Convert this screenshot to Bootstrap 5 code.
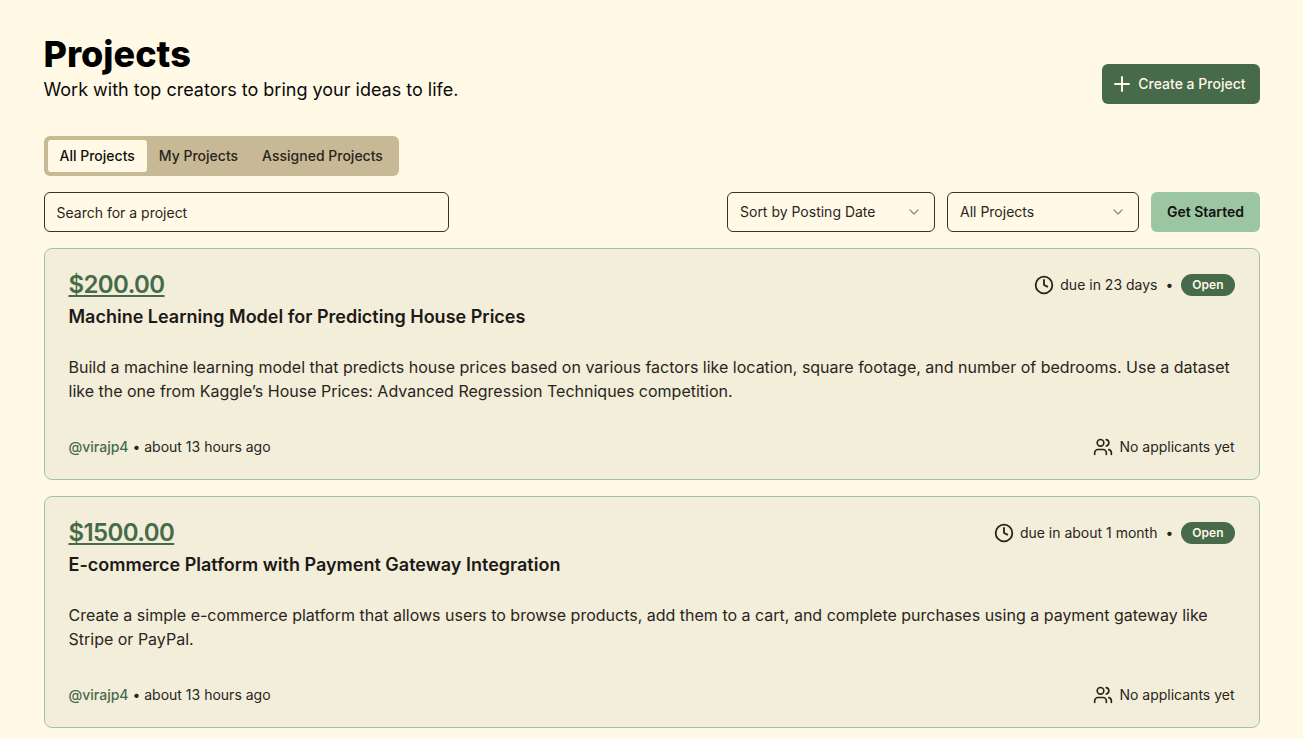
<!DOCTYPE html>
<html lang="en">
<head>
<meta charset="utf-8">
<title>Projects</title>
<link href="https://cdn.jsdelivr.net/npm/bootstrap@5.3.0/dist/css/bootstrap.min.css" rel="stylesheet">
<style>
body{background:#fff9e6;font-family:Inter,"Liberation Sans",sans-serif;color:#1c1917;overflow:hidden}
.shell{width:1216px;margin:0 auto;padding-top:34px}
.page-title{font-size:36px;line-height:40px;font-weight:800;color:#000;margin:0}
.page-sub{font-size:18px;line-height:28px;margin:2px 0 0;color:#0a0a0a}
.create-btn{height:40px;background:#466a4a;color:#fff9e6;border:0;border-radius:6px;font-size:14px;line-height:20px;font-weight:500;padding:0 14px 0 12px;gap:8px}
.create-btn:hover{background:#466a4a;color:#fff9e6}
.tabbar{background:#c8b996;border-radius:6px;padding:4px;height:40px;margin-top:32px;width:355px}
.tabitem{font-size:14px;line-height:20px;font-weight:500;padding:6px 12px;border-radius:3px;color:#2a251c;border:0;background:transparent;white-space:nowrap}
.tabitem.on{background:#fff9e6;color:#111}
.filters{margin-top:16px;height:40px}
.field{height:40px;border:1px solid #3d3222;border-radius:6px;background:#fff9e6;font-size:14px;line-height:20px;color:#2a251c;padding:0 12px;display:flex;align-items:center;justify-content:space-between}
.field-search{width:405px;padding-top:1px}
.field-sort{width:208px}
.field-all{width:192px}
.field svg{opacity:.5}
.pick{padding-left:12.500px}
.filter-end{gap:12px}
.go-btn{height:40px;width:109px;background:#9cc6a2;border:0;border-radius:6px;font-size:14px;line-height:20px;font-weight:600;color:#111;padding:0 0 0 1px}
.go-btn:hover{background:#9cc6a2;color:#111}
.job{background:#f2eeda;border:1px solid #9cc6a2;border-radius:8px;padding:24px 24px 0;height:232px;margin-top:16px}
.price{font-size:24px;line-height:24px;font-weight:600;letter-spacing:-.6px;color:#466a4a;text-decoration:underline}
.price:hover{color:#466a4a}
.job-title{font-size:18px;line-height:28px;font-weight:600;margin:6px 0 0;color:#1c1917}
.job-text{font-size:16px;line-height:24px;margin:24px 0 0;color:#2a251c}
.job-meta{font-size:14px;line-height:20px;color:#2a251c}
.job-meta svg{margin-right:6px}
.job-foot{margin-top:34px}
.handle{color:#466a4a;text-decoration:none;font-weight:500}
.pill{background:#466a4a;color:#fff9e6;font-size:12px;line-height:16px;font-weight:600;border-radius:999px;padding:3px 11px;height:22px}
.sep{margin:0 8px}
</style>
</head>
<body>
<main class="shell">
  <header class="d-flex justify-content-between align-items-end">
    <div>
      <h1 class="page-title">Projects</h1>
      <p class="page-sub">Work with top creators to bring your ideas to life.</p>
    </div>
    <button class="btn create-btn d-flex align-items-center" type="button">
      <svg width="16" height="16" viewBox="0 0 16 16" fill="none" stroke="currentColor" stroke-width="2" stroke-linecap="round"><path d="M8 1v14M1 8h14"/></svg>
      Create a Project
    </button>
  </header>

  <div class="tabbar d-flex align-items-center">
    <button class="tabitem on" type="button">All Projects</button>
    <button class="tabitem" type="button">My Projects</button>
    <button class="tabitem" type="button">Assigned Projects</button>
  </div>

  <div class="filters d-flex justify-content-between">
    <div class="field field-search">Search for a project</div>
    <div class="d-flex filter-end">
      <div class="field field-sort pick">Sort by Posting Date
        <svg width="16" height="16" viewBox="0 0 24 24" fill="none" stroke="currentColor" stroke-width="2" stroke-linecap="round" stroke-linejoin="round"><path d="m6 9 6 6 6-6"/></svg>
      </div>
      <div class="field field-all pick">All Projects
        <svg width="16" height="16" viewBox="0 0 24 24" fill="none" stroke="currentColor" stroke-width="2" stroke-linecap="round" stroke-linejoin="round"><path d="m6 9 6 6 6-6"/></svg>
      </div>
      <button class="btn go-btn" type="button">Get Started</button>
    </div>
  </div>

  <article class="job">
    <div class="d-flex justify-content-between align-items-center">
      <a class="price" href="#">$200.00</a>
      <div class="job-meta d-flex align-items-center">
        <svg width="20" height="20" viewBox="0 0 24 24" fill="none" stroke="currentColor" stroke-width="2.200" stroke-linecap="round" stroke-linejoin="round"><circle cx="12" cy="12" r="10"/><path d="M12 6v6l4 2"/></svg>
        <span>due in 23 days</span><span class="sep">•</span><span class="pill">Open</span>
      </div>
    </div>
    <h2 class="job-title">Machine Learning Model for Predicting House Prices</h2>
    <p class="job-text">Build a machine learning model that predicts house prices based on various factors like location, square footage, and number of bedrooms. Use a dataset like the one from Kaggle’s House Prices: Advanced Regression Techniques competition.</p>
    <div class="job-foot job-meta d-flex justify-content-between align-items-center">
      <div><a class="handle" href="#">@virajp4</a> • about 13 hours ago</div>
      <div class="d-flex align-items-center">
        <svg width="20" height="20" viewBox="0 0 24 24" fill="none" stroke="currentColor" stroke-width="2" stroke-linecap="round" stroke-linejoin="round"><path d="M16 21v-2a4 4 0 0 0-4-4H6a4 4 0 0 0-4 4v2"/><circle cx="9" cy="7" r="4"/><path d="M22 21v-2a4 4 0 0 0-3-3.870M16 3.130a4 4 0 0 1 0 7.750"/></svg>
        No applicants yet
      </div>
    </div>
  </article>

  <article class="job">
    <div class="d-flex justify-content-between align-items-center">
      <a class="price" href="#">$1500.00</a>
      <div class="job-meta d-flex align-items-center">
        <svg width="20" height="20" viewBox="0 0 24 24" fill="none" stroke="currentColor" stroke-width="2.200" stroke-linecap="round" stroke-linejoin="round"><circle cx="12" cy="12" r="10"/><path d="M12 6v6l4 2"/></svg>
        <span>due in about 1 month</span><span class="sep">•</span><span class="pill">Open</span>
      </div>
    </div>
    <h2 class="job-title">E-commerce Platform with Payment Gateway Integration</h2>
    <p class="job-text">Create a simple e-commerce platform that allows users to browse products, add them to a cart, and complete purchases using a payment gateway like Stripe or PayPal.</p>
    <div class="job-foot job-meta d-flex justify-content-between align-items-center">
      <div><a class="handle" href="#">@virajp4</a> • about 13 hours ago</div>
      <div class="d-flex align-items-center">
        <svg width="20" height="20" viewBox="0 0 24 24" fill="none" stroke="currentColor" stroke-width="2" stroke-linecap="round" stroke-linejoin="round"><path d="M16 21v-2a4 4 0 0 0-4-4H6a4 4 0 0 0-4 4v2"/><circle cx="9" cy="7" r="4"/><path d="M22 21v-2a4 4 0 0 0-3-3.870M16 3.130a4 4 0 0 1 0 7.750"/></svg>
        No applicants yet
      </div>
    </div>
  </article>
</main>
<script src="https://cdn.jsdelivr.net/npm/bootstrap@5.3.0/dist/js/bootstrap.bundle.min.js"></script>
</body>
</html>
